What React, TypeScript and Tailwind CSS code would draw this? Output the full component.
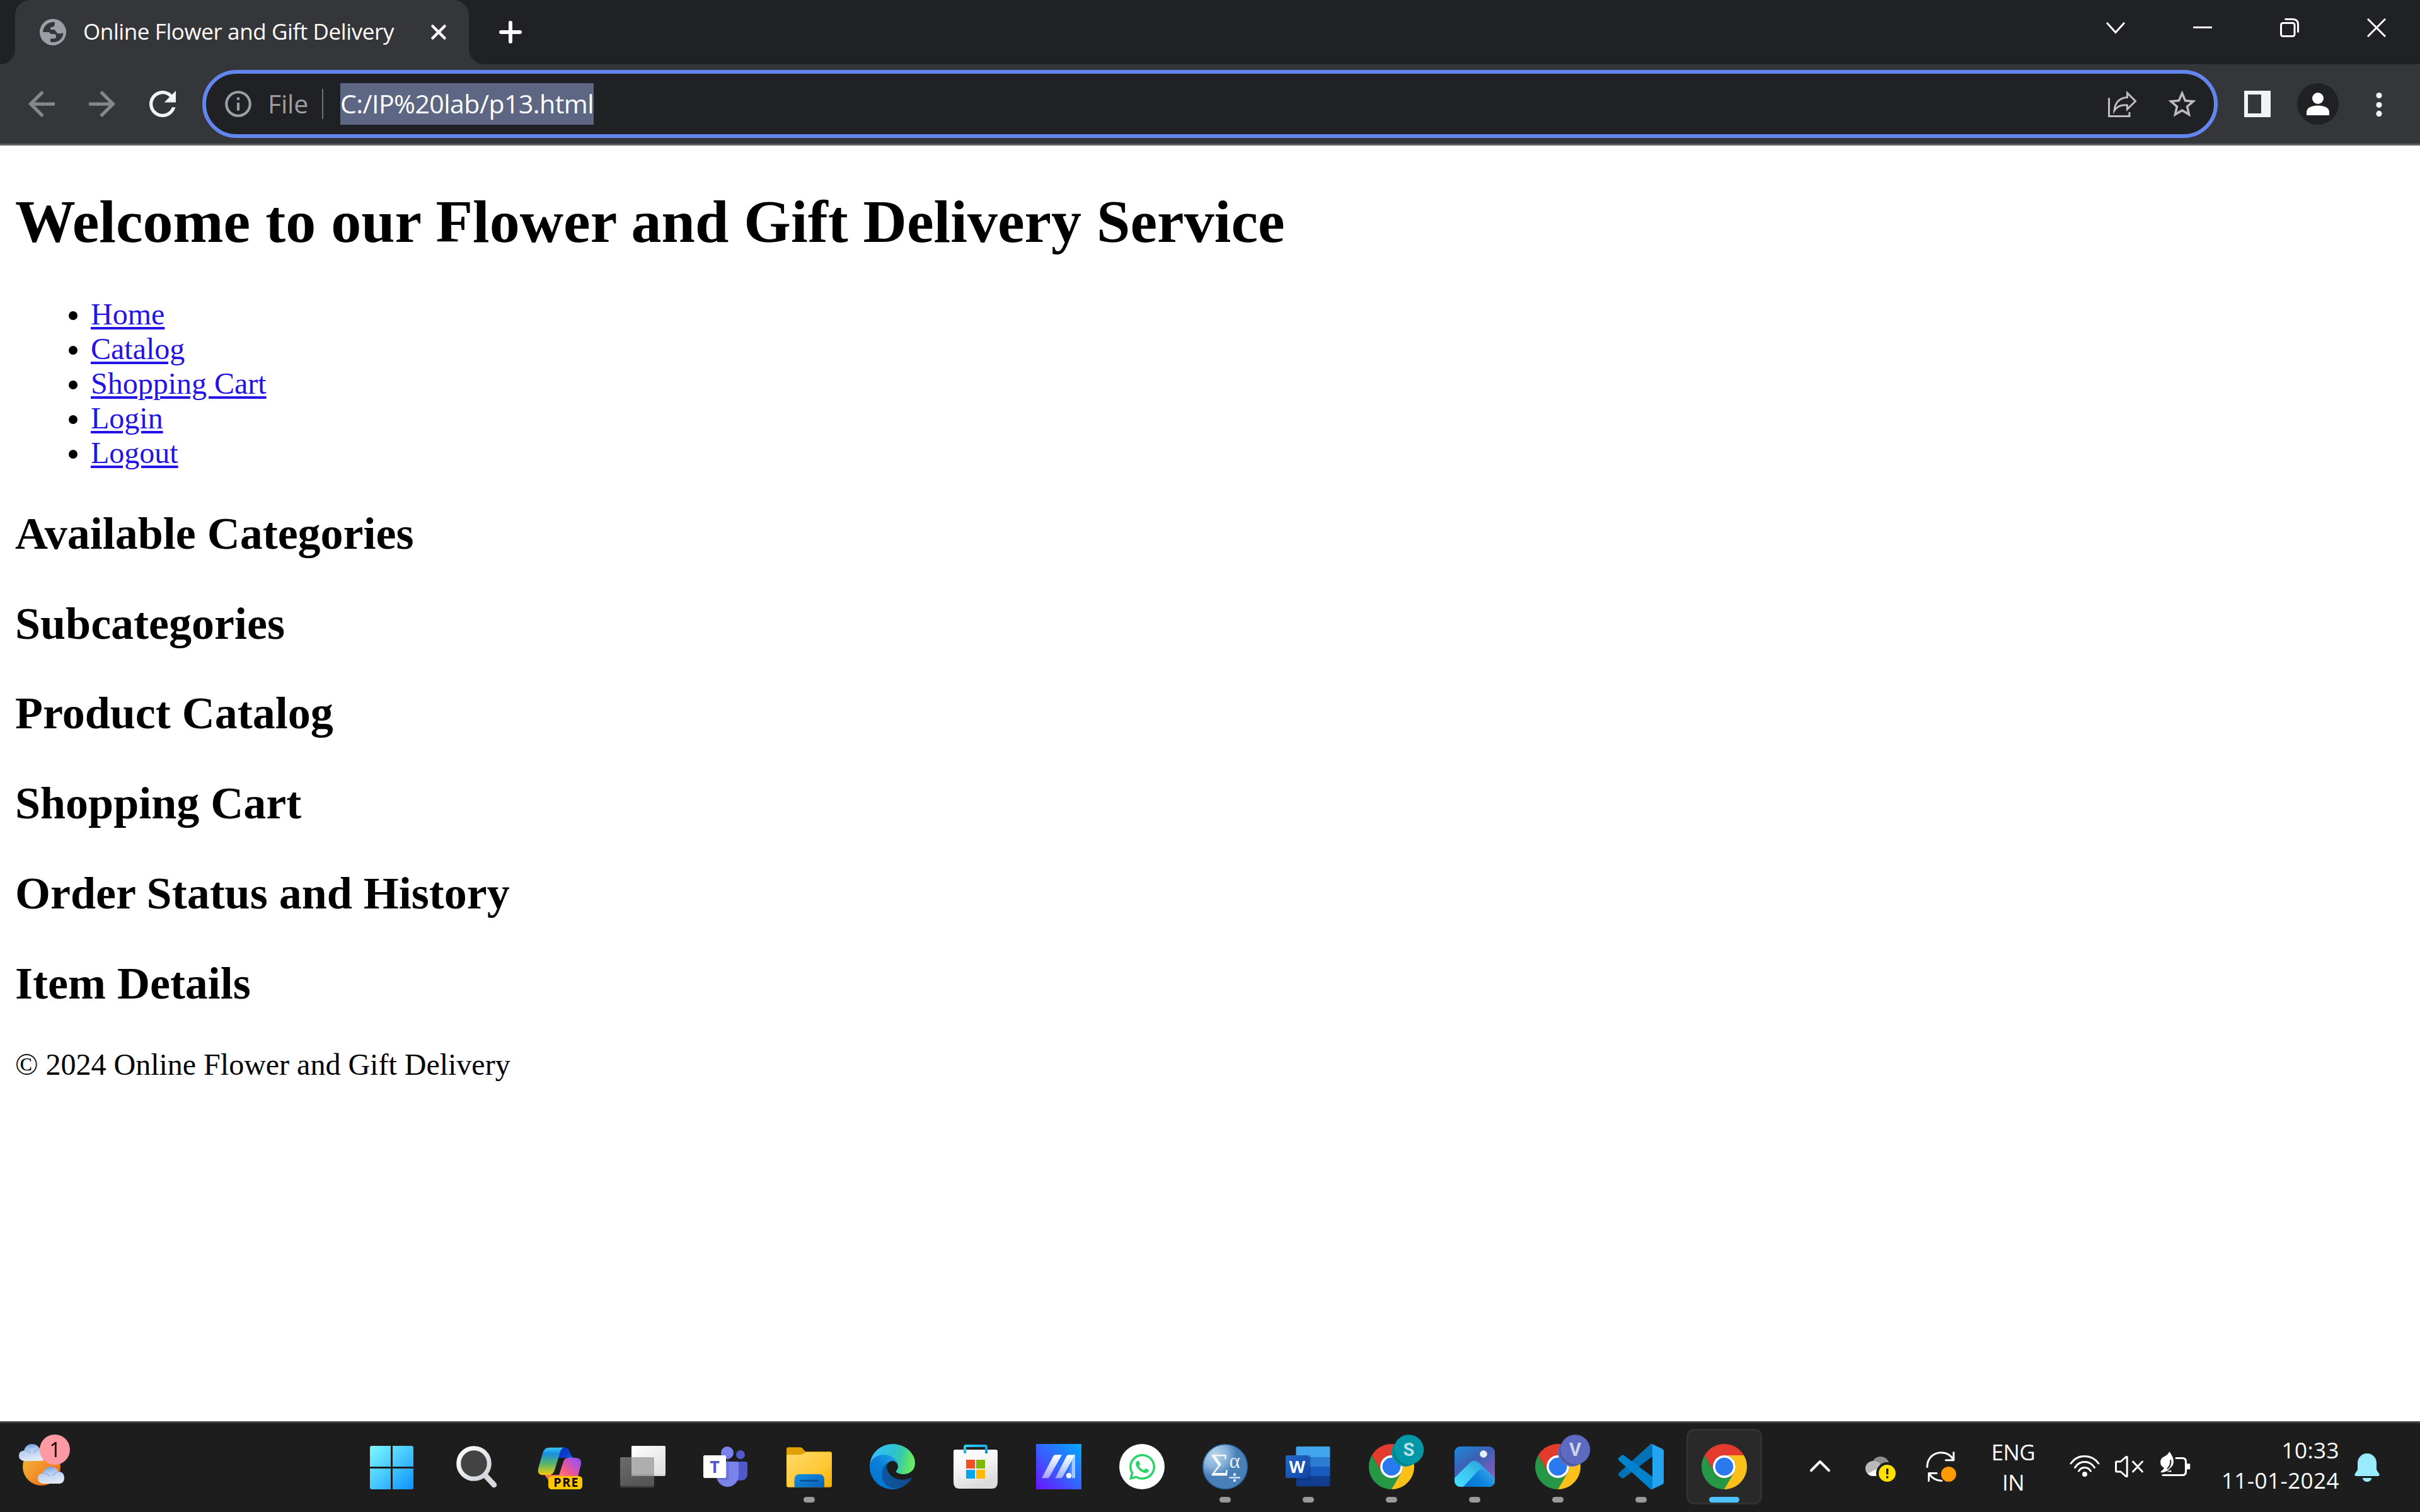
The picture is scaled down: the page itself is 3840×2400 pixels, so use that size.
import React from 'react';
import { FaWhatsapp } from 'react-icons/fa';
import { MdInfoOutline, MdStarBorder } from 'react-icons/md';

const UI = "font-['Open_Sans',sans-serif]";

function Globe() {
  return (
    <svg width="42" height="42" viewBox="0 0 42 42" className="shrink-0">
      <circle cx="21" cy="21" r="21" fill="#9aa0a6" />
      <path
        fill="#35363a"
        d="M24 5C14 4 5.500 10.500 5 21H15C16 23.800 18 24.200 23 24C25.500 24.300 26 25.500 26 28C26 30.500 25 31.300 22 31.300H17V36.500C27 39 37 33 37.500 22C35 23.300 31 24 28 22.500C25.500 21 24.800 18 23.500 17H17C16.500 14.500 17.500 13 20 12.800C22.500 12.600 23.700 11.500 23.700 9Z"
      />
    </svg>
  );
}

function TabStrip() {
  return (
    <div className="flex h-[102px] bg-[#202124]">
      <svg width="24" height="24" viewBox="0 0 24 24" className="self-end shrink-0">
        <path d="M24 0A24 24 0 0 1 0 24H24Z" fill="#35363a" />
      </svg>
      <div className="flex h-full w-[720px] items-center rounded-t-3xl bg-[#35363a] pl-[39px]">
        <Globe />
        <span className={`${UI} ml-[27px] w-[540px] pb-[3px] text-[35px] leading-[50px] tracking-[-0.4px] whitespace-nowrap text-white`}>
          Online Flower and Gift Delivery
        </span>
        <svg width="30" height="30" viewBox="0 0 30 30" className="ml-[9px]" stroke="#fff" strokeWidth="4.500" strokeLinecap="round">
          <path d="M5.500 5.500L24.500 24.500M24.500 5.500L5.500 24.500" />
        </svg>
      </div>
      <svg width="24" height="24" viewBox="0 0 24 24" className="self-end shrink-0">
        <path d="M0 0A24 24 0 0 0 24 24H0Z" fill="#35363a" />
      </svg>
      <svg width="36" height="36" viewBox="0 0 36 36" className="ml-6 self-center" stroke="#fff" strokeWidth="6" strokeLinecap="round">
        <path d="M18 3V33M3 18H33" />
      </svg>
      <div className="ml-auto flex h-[87px]">
        <div className="flex w-[138px] items-center justify-center">
          <svg width="32" height="32" viewBox="0 0 32 32" fill="none" stroke="#fff" strokeWidth="3">
            <path d="M2 8L16 23.500L30 8" />
          </svg>
        </div>
        <div className="flex w-[138px] items-center justify-center">
          <div className="h-[3px] w-[30px] bg-white" />
        </div>
        <div className="flex w-[138px] items-center justify-center">
          <svg width="30" height="30" viewBox="0 0 30 30" fill="none" stroke="#fff" strokeWidth="3">
            <rect x="1.500" y="7.500" width="21.500" height="21" rx="3" />
            <path d="M7.500 1.500H20C25.500 1.500 28.500 4.500 28.500 10V22.500" />
          </svg>
        </div>
        <div className="flex w-[138px] items-center justify-center">
          <svg width="30" height="30" viewBox="0 0 30 30" stroke="#fff" strokeWidth="3">
            <path d="M1 1L29 29M29 1L1 29" />
          </svg>
        </div>
      </div>
    </div>
  );
}

function Toolbar() {
  return (
    <div className="flex h-[129px] items-center border-b-[3px] border-[#606165] bg-[#35363a] pl-[45px]">
      <svg width="42" height="42" viewBox="4 4 16 16" fill="#86878a">
        <path d="M20 11H7.830l5.590-5.590L12 4l-8 8 8 8 1.410-1.410L7.830 13H20v-2z" />
      </svg>
      <svg width="42" height="42" viewBox="4 4 16 16" fill="#86878a" className="ml-[54px]">
        <path d="M12 4l-1.410 1.410L16.170 11H4v2h12.170l-5.580 5.590L12 20l8-8z" />
      </svg>
      <svg width="42" height="42" viewBox="4 4 16 16" fill="#f1f3f4" className="ml-[54px]">
        <path d="M17.650 6.350C16.200 4.900 14.210 4 12 4c-4.420 0-7.990 3.580-7.990 8s3.570 8 7.990 8c3.730 0 6.840-2.550 7.730-6h-2.080c-.82 2.330-3.040 4-5.650 4-3.310 0-6-2.690-6-6s2.690-6 6-6c1.660 0 3.140.69 4.220 1.780L13 11h7V4l-2.350 2.350z" />
      </svg>
      <div className="ml-[42px] flex h-[108px] w-[3198px] items-center rounded-full border-[6px] border-[#6286ee] bg-[#202124] pr-[24px] pl-[26px]">
        <MdInfoOutline size={50} color="#9aa0a6" className="shrink-0" />
        <span className={`${UI} ml-[22px] w-[64px] pb-0.5 text-[41px] leading-[66px] tracking-[-0.2px] text-[#9a9da1]`}>File</span>
        <div className="ml-[22px] h-12 w-0.5 bg-[#6e7074]" />
        <span className={`${UI} ml-[27px] h-[66px] w-[402px] bg-[#5d6784] text-[41px] leading-[64px] tracking-[-0.53px] whitespace-nowrap text-white`}>
          C:/IP%20lab/p13.html
        </span>
        <svg width="46" height="44" viewBox="0 0 46 44" fill="none" stroke="#bdbdbd" strokeWidth="3" className="ml-auto">
          <path d="M1.500 12.500V41.500H34V35" />
          <path d="M30.500 4.500L43.500 17.500L30.500 30.500V24C20 23 14 26.500 10 32.500C11 20 18 12.500 30.500 11.500Z" strokeLinejoin="miter" />
        </svg>
        <MdStarBorder size={53} color="#bdbdbd" className="ml-[45px] shrink-0" />
      </div>
      <svg width="42" height="42" viewBox="0 0 42 42" className="ml-[42px]">
        <path fillRule="evenodd" fill="#f1f3f4" d="M0 0H42V42H0ZM6 6V36H27V6Z" />
      </svg>
      <svg width="66" height="66" viewBox="0 0 66 66" className="ml-[42px]">
        <circle cx="33" cy="33" r="33" fill="#202124" />
        <circle cx="33" cy="24" r="9" fill="#fff" />
        <path d="M15 51V46C15 39 23 35.500 33 35.500S51 39 51 46V51Z" fill="#fff" />
      </svg>
      <svg width="10" height="40" viewBox="0 0 10 40" fill="#f1f3f4" className="ml-[59px]">
        <circle cx="5" cy="6.500" r="4.600" />
        <circle cx="5" cy="21.500" r="4.600" />
        <circle cx="5" cy="36.500" r="3.500" />
        <circle cx="5" cy="35.400" r="4.600" />
      </svg>
    </div>
  );
}

const links = ['Home', 'Catalog', 'Shopping Cart', 'Login', 'Logout'];
const sections = [
  'Available Categories',
  'Subcategories',
  'Product Catalog',
  'Shopping Cart',
  'Order Status and History',
  'Item Details',
];

function Page() {
  return (
    <main className="flex-1 overflow-hidden bg-white px-6 pt-[66px] font-['Liberation_Serif',serif] text-[48px] leading-[55px] text-black">
      <h1 className="text-[96px] leading-[110px] font-bold">Welcome to our Flower and Gift Delivery Service</h1>
      <ul className="mt-16 list-disc pl-[120px]">
        {links.map((l) => (
          <li key={l}>
            <a className="text-[#2413e6] underline decoration-[4px] underline-offset-[4px]">{l}</a>
          </li>
        ))}
      </ul>
      {sections.map((s) => (
        <h2 key={s} className="mt-[59.76px] text-[72px] leading-[83px] font-bold">
          {s}
        </h2>
      ))}
      <p className="mt-[59.76px]">© 2024 Online Flower and Gift Delivery</p>
    </main>
  );
}

function Icon({ children }: { children: React.ReactNode }) {
  return (
    <svg width="72" height="72" viewBox="0 0 72 72" className="shrink-0 overflow-visible">
      {children}
    </svg>
  );
}

function StartIcon() {
  return (
    <Icon>
      <defs>
        <linearGradient id="win" x1="3" y1="3" x2="72" y2="72" gradientUnits="userSpaceOnUse">
          <stop offset="0" stopColor="#7df8ff" />
          <stop offset="0.5" stopColor="#47c8ff" />
          <stop offset="1" stopColor="#0a93ff" />
        </linearGradient>
      </defs>
      <path fill="url(#win)" d="M6 3H36V36H3V6Q3 3 6 3ZM39 3H69Q72 3 72 6V36H39ZM3 39H36V72H6Q3 72 3 69ZM39 39H72V69Q72 72 69 72H39Z" />
    </Icon>
  );
}

function SearchIcon() {
  return (
    <Icon>
      <defs>
        <linearGradient id="lens" x1="0" y1="0" x2="1" y2="1">
          <stop offset="0" stopColor="#ffffff" />
          <stop offset="1" stopColor="#cdd2d8" />
        </linearGradient>
      </defs>
      <path d="M55 51L68 65" stroke="#d6d9de" strokeWidth="8.500" strokeLinecap="round" />
      <circle cx="36" cy="31" r="24.300" fill="#434343" stroke="url(#lens)" strokeWidth="7" />
    </Icon>
  );
}

function CopilotIcon() {
  return (
    <Icon>
      <defs>
        <linearGradient id="cpA" x1="0" y1="0" x2="0" y2="1">
          <stop offset="0" stopColor="#3cc8f4" />
          <stop offset="0.22" stopColor="#168fe0" />
          <stop offset="0.6" stopColor="#5bb568" />
          <stop offset="1" stopColor="#f6c80c" />
        </linearGradient>
        <linearGradient id="cpB" x1="0" y1="0" x2="1" y2="1">
          <stop offset="0" stopColor="#0b2fb8" />
          <stop offset="0.5" stopColor="#0d3fcd" />
          <stop offset="1" stopColor="#1c8af0" />
        </linearGradient>
        <linearGradient id="cpC" x1="1" y1="0" x2="0" y2="1">
          <stop offset="0" stopColor="#8f49f5" />
          <stop offset="0.25" stopColor="#b052dc" />
          <stop offset="0.6" stopColor="#f2588a" />
          <stop offset="1" stopColor="#ff8f60" />
        </linearGradient>
      </defs>
      <path fill="#fb6f52" d="M12 49H40L34 58H22C17 58 15 52 12 49Z" />
      <path fill="url(#cpB)" d="M36 5.700H44C49.500 5.700 51 9 53 14.500C55 20 56.500 21.500 60 22H46C40 22 36 24 33 30Z" />
      <path fill="#1d1d1d" d="M34 22H50L40 48.500H26Z" />
      <path fill="url(#cpA)" d="M20 5.700H44C39 5.700 37 11 35 19L28.500 40C26.500 46.500 24 49.300 18 49.300H9C3 49.300 0.500 45 2.300 38L9 15C11 8.500 14 5.700 20 5.700Z" />
      <path fill="url(#cpC)" d="M51 22H61C69 22 71.500 27 69.500 34L64 56H33L42 28C43.500 24 46 22 51 22Z" />
      <rect x="18" y="51" width="54" height="21" rx="5.500" fill="#ffc700" />
      <text x="26.300" y="68.300" fontFamily="Open Sans, sans-serif" fontWeight="700" fontSize="19.500" letterSpacing="1.600" fill="#000">PRE</text>
    </Icon>
  );
}

function TaskViewIcon() {
  return (
    <Icon>
      <defs>
        <linearGradient id="tvW" x1="0" y1="0" x2="1" y2="1">
          <stop offset="0" stopColor="#ffffff" />
          <stop offset="1" stopColor="#dedede" />
        </linearGradient>
        <linearGradient id="tvG" x1="0" y1="0" x2="0.500" y2="1">
          <stop offset="0" stopColor="#6c6c6c" />
          <stop offset="1" stopColor="#565656" />
        </linearGradient>
      </defs>
      <rect x="0" y="21" width="54" height="48" rx="2" fill="#454545" />
      <rect x="0" y="21" width="54" height="45" rx="2" fill="url(#tvG)" />
      <rect x="18" y="3" width="54" height="48" rx="2" fill="#cfcfcf" />
      <rect x="18" y="3" width="54" height="45.500" rx="2" fill="url(#tvW)" />
      <path d="M18 21H52Q54 21 54 23V51H20Q18 51 18 49Z" fill="#aeaeae" />
      <path d="M18 48.500H54V51H20Q18 51 18 48.500Z" fill="#9b9b9b" />
    </Icon>
  );
}

function TeamsIcon() {
  return (
    <Icon>
      <path d="M45 28H67Q70 28 70 31V47Q70 58 59 58H45Z" fill="#5059c9" />
      <circle cx="59" cy="17" r="7" fill="#5059c9" />
      <path d="M36 28H53Q56 28 56 31V50A17.500 18 0 0 1 21 50V28Z" fill="#7b83eb" />
      <circle cx="38" cy="14" r="10" fill="#7b83eb" />
      <path d="M21 54H36Q38 54 38 52V20H40V54Q40 57 37 57H22Z" fill="#5b62c4" opacity="0.6" />
      <rect x="0" y="18" width="36" height="36" rx="2.500" fill="#fff" />
      <text x="18" y="46" textAnchor="middle" fontFamily="Open Sans, sans-serif" fontWeight="700" fontSize="27" fill="#5059c9">T</text>
    </Icon>
  );
}

function FolderIcon() {
  return (
    <Icon>
      <defs>
        <linearGradient id="fd" x1="0" y1="0" x2="1" y2="1">
          <stop offset="0" stopColor="#ffda6b" />
          <stop offset="0.6" stopColor="#ffc937" />
          <stop offset="1" stopColor="#f5ad00" />
        </linearGradient>
        <linearGradient id="fdB" x1="0" y1="0" x2="1" y2="1">
          <stop offset="0" stopColor="#1493e0" />
          <stop offset="1" stopColor="#0560b8" />
        </linearGradient>
      </defs>
      <path d="M3 5.300H21Q25 5.300 27 9L30 12H69Q72 12 72 15V20H0V8Q0 5.300 3 5.300Z" fill="#e2a103" />
      <path d="M3 17H21Q25 17 28 14.500Q30 13 33 13H69Q72 13 72 16V66Q72 68.700 69 68.700H3Q0 68.700 0 66V20Q0 17 3 17Z" fill="url(#fd)" />
      <path d="M12.500 68.700V57Q12.500 48 21.500 48H51Q60 48 60 57V68.700Z" fill="url(#fdB)" />
      <path d="M22.500 58.300H49.500" stroke="#0b4f91" strokeWidth="2.800" strokeLinecap="round" />
    </Icon>
  );
}

function EdgeIcon() {
  return (
    <svg width="72" height="72" viewBox="4.630 4.920 256 256" className="shrink-0">
      <defs>
        <linearGradient id="e1" x1="63" y1="177" x2="241" y2="177" gradientUnits="userSpaceOnUse">
          <stop offset="0" stopColor="#0c59a4" />
          <stop offset="1" stopColor="#114a8b" />
        </linearGradient>
        <linearGradient id="e2" x1="157" y1="99" x2="46" y2="221" gradientUnits="userSpaceOnUse">
          <stop offset="0" stopColor="#1b9de2" />
          <stop offset="0.450" stopColor="#0c80da" />
          <stop offset="1" stopColor="#0078d4" />
        </linearGradient>
        <linearGradient id="e3" x1="20" y1="70" x2="250" y2="130" gradientUnits="userSpaceOnUse">
          <stop offset="0" stopColor="#38bdf8" />
          <stop offset="0.450" stopColor="#2dc2d3" />
          <stop offset="0.650" stopColor="#36c9ae" />
          <stop offset="0.900" stopColor="#5fe567" />
          <stop offset="1" stopColor="#66eb6e" />
        </linearGradient>
      </defs>
      <path fill="url(#e1)" d="M235.680 195.460a93.730 93.730 0 0 1-10.540 4.710 101.870 101.870 0 0 1-35.900 6.460c-47.320 0-88.540-32.550-88.540-74.320A31.480 31.480 0 0 1 117.130 105c-42.800 1.800-53.800 46.400-53.800 72.530 0 73.880 68.090 81.370 82.760 81.370 7.910 0 19.840-2.300 27-4.560l1.310-.44a128.340 128.340 0 0 0 66.600-52.800 4 4 0 0 0-5.320-5.640z" />
      <path fill="url(#e2)" d="M110.340 246.340A79.200 79.200 0 0 1 87.600 225a80.720 80.720 0 0 1 29.530-120c3.120-1.470 8.450-4.130 15.540-4a32.350 32.350 0 0 1 25.690 13 31.880 31.880 0 0 1 6.360 18.660c0-.21 24.460-79.600-80-79.600-43.900 0-80 41.660-80 78.210a130.150 130.150 0 0 0 12.110 56 128 128 0 0 0 156.380 67.110 75.550 75.550 0 0 1-62.780-8z" />
      <path fill="url(#e3)" d="M156.940 153.780c-.81 1.050-3.300 2.500-3.300 5.660 0 2.610 1.700 5.120 4.720 7.230 14.380 10 41.490 8.680 41.560 8.680a59.560 59.560 0 0 0 30.270-8.350 61.380 61.380 0 0 0 30.430-52.880c.26-22.410-8-37.310-11.340-43.910C228.090 28.760 182.350 4.920 132.610 4.920a128 128 0 0 0-128 126.200c.48-36.540 36.800-66.050 80-66.050 3.500 0 23.460.34 42 10.070 16.340 8.580 24.900 18.940 30.850 29.210 6.180 10.670 7.280 24.150 7.280 29.520s-2.740 13.330-7.800 19.910z" />
    </svg>
  );
}

function StoreIcon() {
  return (
    <Icon>
      <defs>
        <linearGradient id="st" x1="0" y1="0" x2="0.400" y2="1">
          <stop offset="0" stopColor="#ffffff" />
          <stop offset="0.500" stopColor="#f4f4f4" />
          <stop offset="1" stopColor="#dcdcdc" />
        </linearGradient>
        <linearGradient id="stH" x1="0" y1="0" x2="1" y2="1">
          <stop offset="0" stopColor="#2cd0f5" />
          <stop offset="1" stopColor="#0f8ad8" />
        </linearGradient>
      </defs>
      <path d="M4 9H68Q71 9 71 12V61Q71 71 61 71H11Q1 71 1 61V12Q1 9 4 9Z" fill="url(#st)" />
      <path d="M19 15V5Q19 3 21 3H51Q53 3 53 5V15" fill="none" stroke="url(#stH)" strokeWidth="4" />
      <rect x="21" y="25" width="14" height="14" fill="#f25022" />
      <rect x="37" y="25" width="14" height="14" fill="#7fba00" />
      <rect x="21" y="41" width="14" height="14" fill="#00a4ef" />
      <rect x="37" y="41" width="14" height="14" fill="#ffb900" />
    </Icon>
  );
}

function MyAsusIcon() {
  return (
    <Icon>
      <defs>
        <linearGradient id="ma" x1="0" y1="72" x2="72" y2="0" gradientUnits="userSpaceOnUse">
          <stop offset="0" stopColor="#6b13ff" />
          <stop offset="0.500" stopColor="#3464ff" />
          <stop offset="1" stopColor="#02aaff" />
        </linearGradient>
        <linearGradient id="maS" x1="0" y1="0" x2="0" y2="1">
          <stop offset="0" stopColor="#fff" />
          <stop offset="1" stopColor="#fff" stopOpacity="0.500" />
        </linearGradient>
      </defs>
      <rect width="72" height="72" fill="url(#ma)" />
      <path d="M31 17.300H41L21 52.500Q20 54.300 18 54.300H9L27.500 19Q28.500 17.300 31 17.300Z" fill="url(#maS)" />
      <path d="M62 17.300V54.300H50L57 26Z" fill="#fff" opacity="0.200" />
      <path d="M62 17.300V54.300H57V27Z" fill="#fff" opacity="0.500" />
      <path d="M52 17.300H62L42 52.500Q41 54.300 39 54.300H30.500L48.500 19Q49.500 17.300 52 17.300Z" fill="url(#maS)" />
      <circle cx="52" cy="50.200" r="4.200" fill="#fff" />
    </Icon>
  );
}

function WhatsAppIcon() {
  return (
    <div className="flex size-[72px] shrink-0 items-center justify-center rounded-full bg-white">
      <FaWhatsapp size={47} color="#25d366" />
    </div>
  );
}

function MathIcon() {
  return (
    <Icon>
      <defs>
        <radialGradient id="mt" cx="0.260" cy="0.220" r="0.500">
          <stop offset="0" stopColor="#b9d6ea" />
          <stop offset="0.600" stopColor="#86b1d8" />
          <stop offset="1" stopColor="#4a80b8" />
        </radialGradient>
      </defs>
      <circle cx="36" cy="36" r="35.200" fill="url(#mt)" stroke="#2f69a8" strokeWidth="1.600" />
      <text x="12.500" y="49.700" fontFamily="Liberation Serif, serif" fontSize="51" fill="#f4f8fc">Σ</text>
      <text x="42.500" y="37.500" fontFamily="Liberation Serif, serif" fontSize="33" fill="#e6eff8">α</text>
      <path d="M42.500 53.500H60" stroke="#e6eff8" strokeWidth="2.200" />
      <circle cx="51" cy="48.500" r="2.200" fill="#e6eff8" />
      <circle cx="51" cy="58" r="2.200" fill="#e6eff8" />
    </Icon>
  );
}

function WordIcon() {
  return (
    <Icon>
      <defs>
        <linearGradient id="wd" x1="0" y1="0" x2="1" y2="1">
          <stop offset="0" stopColor="#2368c4" />
          <stop offset="1" stopColor="#1146ab" />
        </linearGradient>
      </defs>
      <path d="M18.500 4H68.500Q70.500 4 70.500 6V21H16.500V6Q16.500 4 18.500 4Z" fill="#41a5ee" />
      <rect x="16.500" y="21" width="54" height="15.500" fill="#2b7cd3" />
      <rect x="16.500" y="36" width="54" height="15.500" fill="#185abd" />
      <path d="M16.500 51H70.500V65Q70.500 67.300 68.500 67.300H18.500Q16.500 67.300 16.500 65Z" fill="#103f91" />
      <path d="M16.500 54H36V18H37Q39.500 18 39.500 21V54Q39.500 57.500 36 57.500H16.500Z" fill="#0a2b6b" opacity="0.400" />
      <rect x="0" y="18" width="36.500" height="36" rx="2.800" fill="url(#wd)" />
      <text x="18.200" y="45.600" textAnchor="middle" fontFamily="Open Sans, sans-serif" fontWeight="700" fontSize="26.500" fill="#fff">W</text>
    </Icon>
  );
}

function ChromeIcon({ badge, color }: { badge?: string; color?: string }) {
  return (
    <Icon>
      <path d="M36 18H67.200A36 36 0 0 0 4.800 18L20.400 45A18 18 0 0 1 36 18Z" fill="#e33b2e" />
      <path d="M4.800 18L20.400 45A18 18 0 0 0 51.600 45L36 72A36 36 0 0 1 4.800 18Z" fill="#269746" />
      <path d="M67.200 18H36A18 18 0 0 1 51.600 45L36 72A36 36 0 0 0 67.200 18Z" fill="#fbc01a" />
      <circle cx="36" cy="36" r="18" fill="#fff" />
      <circle cx="36" cy="36" r="14.300" fill="#2a79ee" />
      {badge && (
        <>
          <circle cx="58" cy="14" r="22" fill={color} />
          <circle cx="61.500" cy="11" r="23" fill="#000" opacity="0.250" />
          <circle cx="63.500" cy="9" r="23.700" fill={color} />
          <text x="63.500" y="19" textAnchor="middle" fontFamily="Roboto, sans-serif" fontWeight="700" fontSize="29" fill="#e8f1f6" opacity="0.800">
            {badge}
          </text>
        </>
      )}
    </Icon>
  );
}

function PhotosIcon() {
  return (
    <Icon>
      <defs>
        <linearGradient id="ph" x1="0" y1="0" x2="0.700" y2="1">
          <stop offset="0" stopColor="#1a8bdc" />
          <stop offset="0.450" stopColor="#3d5fb4" />
          <stop offset="1" stopColor="#8a5cc0" />
        </linearGradient>
        <linearGradient id="phM" x1="0" y1="1" x2="1" y2="0.200">
          <stop offset="0" stopColor="#4be3ff" />
          <stop offset="0.500" stopColor="#3bc8f2" />
          <stop offset="1" stopColor="#2597d6" />
        </linearGradient>
        <linearGradient id="phF" x1="0" y1="1" x2="1" y2="0.500">
          <stop offset="0" stopColor="#0670cc" />
          <stop offset="0.600" stopColor="#0b85dc" />
          <stop offset="1" stopColor="#3a9ee4" />
        </linearGradient>
        <clipPath id="phC">
          <rect x="4" y="4" width="64" height="64" rx="9" />
        </clipPath>
      </defs>
      <g clipPath="url(#phC)">
        <rect x="4" y="4" width="64" height="64" fill="url(#ph)" />
        <path d="M0 58L28 30Q35.500 23.500 43 30L72 58V72H0Z" fill="url(#phM)" />
        <path d="M14 72L42 42Q47 37.500 53 42L72 58V72Z" fill="url(#phF)" />
        <circle cx="50" cy="16" r="5.800" fill="#eaeef4" />
      </g>
    </Icon>
  );
}

function CodeIcon() {
  return (
    <svg width="72" height="72" viewBox="0 0 100 100" className="shrink-0">
      <path fill="#0072b5" d="M96.460 10.800L75.860.880C73.470-.270 70.620.210 68.750 2.080L1.300 63.580c-1.810 1.660-1.810 4.510 0 6.170l5.510 5c1.490 1.350 3.730 1.450 5.330.24L93.360 13.370C96.090 11.300 100 13.250 100 16.670v-.24c0-2.400-1.380-4.590-3.540-5.630z" />
      <path fill="#0083cf" d="M96.460 89.200L75.860 99.120c-2.390 1.150-5.240.67-7.110-1.200L1.300 36.420c-1.810-1.660-1.810-4.510 0-6.170l5.510-5c1.490-1.350 3.730-1.450 5.330-.24L93.360 86.630C96.090 88.700 100 86.750 100 83.330v.24c0 2.400-1.380 4.590-3.540 5.630z" />
      <path fill="#24a5f2" d="M75.860 99.130c-2.390 1.150-5.240.66-7.110-1.210C71.060 100.220 75 98.590 75 95.330V4.670C75 1.410 71.060-.220 68.750 2.080 70.620.210 73.470-.270 75.860.870l20.600 9.910C98.620 11.820 100 14.010 100 16.410v67.180c0 2.400-1.380 4.590-3.540 5.630z" />
    </svg>
  );
}

type App = { icon: React.ReactNode; state?: 'open' | 'active' };

const system: App[] = [{ icon: <StartIcon /> }, { icon: <SearchIcon /> }];

const apps: App[] = [
  { icon: <CopilotIcon /> },
  { icon: <TaskViewIcon /> },
  { icon: <TeamsIcon /> },
  { icon: <FolderIcon />, state: 'open' },
  { icon: <EdgeIcon /> },
  { icon: <StoreIcon /> },
  { icon: <MyAsusIcon /> },
  { icon: <WhatsAppIcon /> },
  { icon: <MathIcon />, state: 'open' },
  { icon: <WordIcon />, state: 'open' },
  { icon: <ChromeIcon badge="S" color="#0097a7" />, state: 'open' },
  { icon: <PhotosIcon />, state: 'open' },
  { icon: <ChromeIcon badge="V" color="#5c6bc0" />, state: 'open' },
  { icon: <CodeIcon />, state: 'open' },
  { icon: <ChromeIcon />, state: 'active' },
];

function AppButton({ icon, state }: App) {
  return (
    <div className="w-[132px] px-1.5 pt-[9px]">
      <div
        className={
          state === 'active'
            ? 'flex h-[120px] flex-col items-center rounded-xl border-[3px] border-[#323232] bg-[#292929] pt-[21px]'
            : 'flex h-[120px] flex-col items-center pt-6'
        }
      >
        {icon}
        {state === 'open' && <div className="mt-3 h-[9px] w-[18px] shrink-0 rounded-full bg-[#999]" />}
        {state === 'active' && <div className="mt-3 h-[9px] w-12 shrink-0 rounded-full bg-[#4cc2ff]" />}
      </div>
    </div>
  );
}

function Cloud({ x, y }: { x: number; y: number }) {
  return (
    <g transform={`translate(${x} ${y})`}>
      <path d="M8 27Q0 26 0 18.500Q0 11 8 10.500Q11 0 20.500 0Q30 0 32.500 8Q42 8 42 17.500Q42 26 35 27Z" fill="url(#cl)" />
      <path d="M8 10.500Q15 10 19 15M24 15Q26 9 32.500 8" fill="none" stroke="#8fb0e6" strokeWidth="1.500" />
    </g>
  );
}

function Weather() {
  return (
    <svg width="90" height="90" viewBox="0 0 90 90" className="mt-[12px] ml-6">
      <defs>
        <linearGradient id="sun" x1="0" y1="0" x2="1" y2="1">
          <stop offset="0" stopColor="#efc03a" />
          <stop offset="0.500" stopColor="#f3932a" />
          <stop offset="1" stopColor="#f25a0a" />
        </linearGradient>
        <linearGradient id="cl" x1="0" y1="0" x2="0.300" y2="1">
          <stop offset="0" stopColor="#5e8cdc" />
          <stop offset="0.450" stopColor="#b7ccef" />
          <stop offset="1" stopColor="#dfe8f8" />
        </linearGradient>
      </defs>
      <circle cx="42" cy="57" r="30" fill="url(#sun)" />
      <Cloud x={6} y={21} />
      <Cloud x={36} y={57} />
      <circle cx="63" cy="30" r="24" fill="#ff99a4" />
      <text x="63.500" y="41.500" textAnchor="middle" fontFamily="Open Sans, sans-serif" fontSize="32" fill="#000">1</text>
    </svg>
  );
}

function TrayIcon({ className, children }: { className: string; children: React.ReactNode }) {
  return (
    <svg width="48" height="48" viewBox="0 0 48 48" fill="none" stroke="#fff" strokeWidth="3" strokeLinecap="round" strokeLinejoin="round" className={`shrink-0 overflow-visible ${className}`}>
      {children}
    </svg>
  );
}

function Tray() {
  return (
    <div className={`${UI} flex h-[138px] items-center text-[35px] leading-[48px] text-white`}>
      <TrayIcon className="ml-[62px]">
        <path d="M10 30L24 16L38 30" strokeWidth="4" />
      </TrayIcon>
      <TrayIcon className="ml-12">
        <g stroke="none">
          <circle cx="24" cy="22" r="14" fill="#8d8d8d" />
          <path d="M12 15C19 15 22 18 26 21L34 39H12A12 12 0 0 1 12 15Z" fill="#b9b9b9" />
          <path d="M3.500 35L24 25V38.700H12Q6.500 38.500 3.500 35Z" fill="#fff" />
          <circle cx="34.500" cy="34.500" r="17.500" fill="#1d1d1d" />
          <circle cx="34.500" cy="34.500" r="13.500" fill="#fbe000" />
          <rect x="33" y="27" width="3.400" height="9.500" rx="1" fill="#1d1d1d" />
          <rect x="33" y="39" width="3.400" height="3.400" rx="1" fill="#1d1d1d" />
        </g>
      </TrayIcon>
      <TrayIcon className="ml-12">
        <path d="M2 24.500C2 10.500 12 1.700 24 1.700C33 1.700 40 6 44 13.500M44 1.500V13.700H31.500M4.500 46.500V34.500H17M5 35C9.500 42.500 16 46 25 46.500" />
        <circle cx="36" cy="36" r="12" fill="#ff9a05" stroke="none" />
      </TrayIcon>
      <div className="ml-[49px] w-[83px] pt-px text-center tracking-[-0.6px]">
        <div>ENG</div>
        <div>IN</div>
      </div>
      <TrayIcon className="ml-12">
        <path d="M2 19C13 3.500 35 3.500 46 19M8.500 25.500C16 13.500 32 13.500 39.500 25.500M14.500 31C19 23.500 29 23.500 33.500 31" />
        <circle cx="24" cy="36" r="4" fill="#fff" stroke="none" />
      </TrayIcon>
      <TrayIcon className="ml-6">
        <path d="M1.500 17.500Q1.500 16 3 16H9L17.500 8.500H19.200V39.500H17.500L9 32H3Q1.500 32 1.500 30.500ZM28.500 16L43.500 32M43.500 16L28.500 32" />
      </TrayIcon>
      <TrayIcon className="ml-6">
        <path d="M25 10.500H35Q40.500 10.500 40.500 16V32Q40.500 37.500 35 37.500H4" strokeWidth="3.200" />
        <path d="M41 20H46.500V27.500H41Z" fill="#fff" strokeWidth="1.500" />
        <path d="M14.300 0Q21 9 21 16Q21 22 16 26Q13 30 8 32Q3 34 0.500 33Q0.500 31 4 29L6 26Q0 23 0 16.500Q0 10 8 7Q12 5 14.300 0Z" fill="#fff" stroke="none" />
        <path d="M16.300 14Q17 22 11.500 27" stroke="#1d1d1d" strokeWidth="2" />
        <path d="M10 32Q14 30.500 17 29.500L17.500 32.500Z" fill="#fff" stroke="none" />
      </TrayIcon>
      <div className="ml-[24px] w-[212px] pb-1 text-right tracking-[0.45px]">
        <div>10:33</div>
        <div>11-01-2024</div>
      </div>
      <TrayIcon className="ml-[20px]">
        <g fill="#99ebff" stroke="none">
          <path d="M24 3A15 15 0 0 1 39 18V29L43.300 35.500Q44.500 39 41 39H7Q3.500 39 4.700 35.500L9 29V18A15 15 0 0 1 24 3Z" />
          <path d="M16.500 42H31.500Q29.500 48 24 48T16.500 42Z" />
        </g>
      </TrayIcon>
    </div>
  );
}

function Taskbar() {
  return (
    <div className="flex h-36 border-t-[3px] border-b border-t-[#3f3f3f] border-b-[#251a1f] bg-[#1d1d1d]">
      <div className="w-[554px] shrink-0">
        <Weather />
      </div>
      <div className="flex shrink-0 gap-1">
        <div className="flex">
          {system.map((a, i) => (
            <AppButton key={i} {...a} />
          ))}
        </div>
        <div className="flex">
          {apps.map((a, i) => (
            <AppButton key={i} {...a} />
          ))}
        </div>
      </div>
      <Tray />
    </div>
  );
}

export default function App() {
  return (
    <div className="flex h-[2400px] w-[3840px] flex-col overflow-hidden bg-white">
      <TabStrip />
      <Toolbar />
      <Page />
      <Taskbar />
    </div>
  );
}
